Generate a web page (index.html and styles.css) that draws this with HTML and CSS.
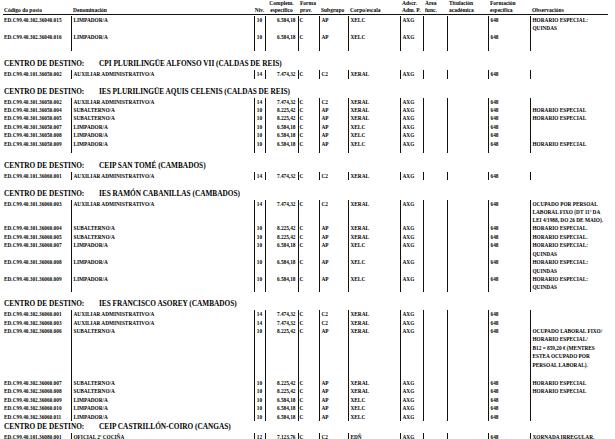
FILE: index.html
```html
<!DOCTYPE html>
<html lang="gl">
<head>
<meta charset="utf-8">
<title>Relación de postos</title>
<link rel="stylesheet" href="styles.css">
</head>
<body>
<div class="page">
<table class="hdr">
<colgroup><col class="c1"><col class="c2"><col class="c3"><col class="c4"><col class="c5"><col class="c6"><col class="c7"><col class="c8"><col class="c9"><col class="c10"><col class="c11"><col class="c12"></colgroup>
<tr>
<th class="l">Código do posto</th><th class="l">Denominación</th><th class="ctr">Niv.</th><th class="ctr">Complem.<br>específico</th><th class="l">Forma<br>prov.</th><th class="l">Subgrupo</th><th class="l">Corpo/escala</th><th class="l">Adscr.<br>Adm. P.</th><th class="l">Área<br>func.</th><th class="l">Titulación<br>académica</th><th class="l">Formación<br>específica</th><th class="l">Observacións</th>
</tr>
</table>

<table class="blk first">
<colgroup><col class="c1"><col class="c2"><col class="c3"><col class="c4"><col class="c5"><col class="c6"><col class="c7"><col class="c8"><col class="c9"><col class="c10"><col class="c11"><col class="c12"></colgroup>
<tr><td>ED.C99.40.302.36040.015</td><td>LIMPADOR/A</td><td class="n">10</td><td class="m">6.584,18</td><td class="f">C</td><td>AP</td><td>XELC</td><td>AXG</td><td></td><td></td><td>648</td><td>HORARIO ESPECIAL:<br>QUINDAS</td></tr>
<tr><td>ED.C99.40.302.36040.016</td><td>LIMPADOR/A</td><td class="n">10</td><td class="m">6.584,18</td><td class="f">C</td><td>AP</td><td>XELC</td><td>AXG</td><td></td><td></td><td>648</td><td></td></tr>
<tr class="pad"><td></td><td></td><td></td><td></td><td></td><td></td><td></td><td></td><td></td><td></td><td></td><td></td></tr>
</table>

<div class="sec"><span class="lbl">CENTRO DE DESTINO:</span>CPI PLURILINGÜE ALFONSO VII (CALDAS DE REIS)</div>
<table class="blk">
<colgroup><col class="c1"><col class="c2"><col class="c3"><col class="c4"><col class="c5"><col class="c6"><col class="c7"><col class="c8"><col class="c9"><col class="c10"><col class="c11"><col class="c12"></colgroup>
<tr><td>ED.C99.40.101.36050.002</td><td>AUXILIAR ADMINISTRATIVO/A</td><td class="n">14</td><td class="m">7.474,32</td><td class="f">C</td><td>C2</td><td>XERAL</td><td>AXG</td><td></td><td></td><td>648</td><td></td></tr>
</table>

<div class="sec"><span class="lbl">CENTRO DE DESTINO:</span>IES PLURILINGÜE AQUIS CELENIS (CALDAS DE REIS)</div>
<table class="blk">
<colgroup><col class="c1"><col class="c2"><col class="c3"><col class="c4"><col class="c5"><col class="c6"><col class="c7"><col class="c8"><col class="c9"><col class="c10"><col class="c11"><col class="c12"></colgroup>
<tr><td>ED.C99.40.301.36050.002</td><td>AUXILIAR ADMINISTRATIVO/A</td><td class="n">14</td><td class="m">7.474,32</td><td class="f">C</td><td>C2</td><td>XERAL</td><td>AXG</td><td></td><td></td><td>648</td><td></td></tr>
<tr><td>ED.C99.40.301.36050.004</td><td>SUBALTERNO/A</td><td class="n">10</td><td class="m">8.225,42</td><td class="f">C</td><td>AP</td><td>XERAL</td><td>AXG</td><td></td><td></td><td>648</td><td>HORARIO ESPECIAL</td></tr>
<tr><td>ED.C99.40.301.36050.005</td><td>SUBALTERNO/A</td><td class="n">10</td><td class="m">8.225,42</td><td class="f">C</td><td>AP</td><td>XERAL</td><td>AXG</td><td></td><td></td><td>648</td><td>HORARIO ESPECIAL</td></tr>
<tr><td>ED.C99.40.301.36050.007</td><td>LIMPADOR/A</td><td class="n">10</td><td class="m">6.584,18</td><td class="f">C</td><td>AP</td><td>XELC</td><td>AXG</td><td></td><td></td><td>648</td><td></td></tr>
<tr><td>ED.C99.40.301.36050.008</td><td>LIMPADOR/A</td><td class="n">10</td><td class="m">6.584,18</td><td class="f">C</td><td>AP</td><td>XELC</td><td>AXG</td><td></td><td></td><td>648</td><td></td></tr>
<tr><td>ED.C99.40.301.36050.009</td><td>LIMPADOR/A</td><td class="n">10</td><td class="m">6.584,18</td><td class="f">C</td><td>AP</td><td>XELC</td><td>AXG</td><td></td><td></td><td>648</td><td>HORARIO ESPECIAL</td></tr>
<tr class="pad short"><td></td><td></td><td></td><td></td><td></td><td></td><td></td><td></td><td></td><td></td><td></td><td></td></tr>
</table>

<div class="sec"><span class="lbl">CENTRO DE DESTINO:</span>CEIP SAN TOMÉ (CAMBADOS)</div>
<table class="blk">
<colgroup><col class="c1"><col class="c2"><col class="c3"><col class="c4"><col class="c5"><col class="c6"><col class="c7"><col class="c8"><col class="c9"><col class="c10"><col class="c11"><col class="c12"></colgroup>
<tr><td>ED.C99.40.101.36060.001</td><td>AUXILIAR ADMINISTRATIVO/A</td><td class="n">14</td><td class="m">7.474,32</td><td class="f">C</td><td>C2</td><td>XERAL</td><td>AXG</td><td></td><td></td><td>648</td><td></td></tr>
</table>

<div class="sec wide"><span class="lbl">CENTRO DE DESTINO:</span>IES RAMÓN CABANILLAS (CAMBADOS)</div>
<table class="blk">
<colgroup><col class="c1"><col class="c2"><col class="c3"><col class="c4"><col class="c5"><col class="c6"><col class="c7"><col class="c8"><col class="c9"><col class="c10"><col class="c11"><col class="c12"></colgroup>
<tr><td>ED.C99.40.301.36060.003</td><td>AUXILIAR ADMINISTRATIVO/A</td><td class="n">14</td><td class="m">7.474,32</td><td class="f">C</td><td>C2</td><td>XERAL</td><td>AXG</td><td></td><td></td><td>648</td><td class="obs3">OCUPADO POR PERSOAL<br>LABORAL FIXO (DT 11ª DA<br>LEI 4/1988, DO 26 DE MAIO).</td></tr>
<tr><td>ED.C99.40.301.36060.004</td><td>SUBALTERNO/A</td><td class="n">10</td><td class="m">8.225,42</td><td class="f">C</td><td>AP</td><td>XERAL</td><td>AXG</td><td></td><td></td><td>648</td><td>HORARIO ESPECIAL.</td></tr>
<tr><td>ED.C99.40.301.36060.005</td><td>SUBALTERNO/A</td><td class="n">10</td><td class="m">8.225,42</td><td class="f">C</td><td>AP</td><td>XERAL</td><td>AXG</td><td></td><td></td><td>648</td><td>HORARIO ESPECIAL.</td></tr>
<tr><td>ED.C99.40.301.36060.007</td><td>LIMPADOR/A</td><td class="n">10</td><td class="m">6.584,18</td><td class="f">C</td><td>AP</td><td>XELC</td><td>AXG</td><td></td><td></td><td>648</td><td>HORARIO ESPECIAL:<br>QUINDAS</td></tr>
<tr><td>ED.C99.40.301.36060.008</td><td>LIMPADOR/A</td><td class="n">10</td><td class="m">6.584,18</td><td class="f">C</td><td>AP</td><td>XELC</td><td>AXG</td><td></td><td></td><td>648</td><td>HORARIO ESPECIAL:<br>QUINDAS</td></tr>
<tr><td>ED.C99.40.301.36060.009</td><td>LIMPADOR/A</td><td class="n">10</td><td class="m">6.584,18</td><td class="f">C</td><td>AP</td><td>XELC</td><td>AXG</td><td></td><td></td><td>648</td><td>HORARIO ESPECIAL:<br>QUINDAS</td></tr>
</table>

<div class="sec tight"><span class="lbl">CENTRO DE DESTINO:</span>IES FRANCISCO ASOREY (CAMBADOS)</div>
<table class="blk">
<colgroup><col class="c1"><col class="c2"><col class="c3"><col class="c4"><col class="c5"><col class="c6"><col class="c7"><col class="c8"><col class="c9"><col class="c10"><col class="c11"><col class="c12"></colgroup>
<tr><td>ED.C99.40.302.36060.001</td><td>AUXILIAR ADMINISTRATIVO/A</td><td class="n">14</td><td class="m">7.474,32</td><td class="f">C</td><td>C2</td><td>XERAL</td><td>AXG</td><td></td><td></td><td>648</td><td></td></tr>
<tr><td>ED.C99.40.302.36060.003</td><td>AUXILIAR ADMINISTRATIVO/A</td><td class="n">14</td><td class="m">7.474,32</td><td class="f">C</td><td>C2</td><td>XERAL</td><td>AXG</td><td></td><td></td><td>648</td><td></td></tr>
<tr class="tall"><td>ED.C99.40.302.36060.006</td><td>SUBALTERNO/A</td><td class="n">10</td><td class="m">8.225,42</td><td class="f">C</td><td>AP</td><td>XERAL</td><td>AXG</td><td></td><td></td><td>648</td><td>OCUPADO LABORAL FIXO/<br>HORARIO ESPECIAL/<br>B12 = 859,20 € (MENTRES<br>ESTEA OCUPADO POR<br>PERSOAL LABORAL).</td></tr>
<tr><td>ED.C99.40.302.36060.007</td><td>SUBALTERNO/A</td><td class="n">10</td><td class="m">8.225,42</td><td class="f">C</td><td>AP</td><td>XERAL</td><td>AXG</td><td></td><td></td><td>648</td><td>HORARIO ESPECIAL</td></tr>
<tr><td>ED.C99.40.302.36060.008</td><td>SUBALTERNO/A</td><td class="n">10</td><td class="m">8.225,42</td><td class="f">C</td><td>AP</td><td>XERAL</td><td>AXG</td><td></td><td></td><td>648</td><td>HORARIO ESPECIAL</td></tr>
<tr><td>ED.C99.40.302.36060.009</td><td>LIMPADOR/A</td><td class="n">10</td><td class="m">6.584,18</td><td class="f">C</td><td>AP</td><td>XELC</td><td>AXG</td><td></td><td></td><td>648</td><td></td></tr>
<tr><td>ED.C99.40.302.36060.010</td><td>LIMPADOR/A</td><td class="n">10</td><td class="m">6.584,18</td><td class="f">C</td><td>AP</td><td>XELC</td><td>AXG</td><td></td><td></td><td>648</td><td></td></tr>
<tr><td>ED.C99.40.302.36060.011</td><td>LIMPADOR/A</td><td class="n">10</td><td class="m">6.584,18</td><td class="f">C</td><td>AP</td><td>XELC</td><td>AXG</td><td></td><td></td><td>648</td><td></td></tr>
</table>

<div class="sec tighter"><span class="lbl">CENTRO DE DESTINO:</span>CEIP CASTRILLÓN-COIRO (CANGAS)</div>
<table class="blk">
<colgroup><col class="c1"><col class="c2"><col class="c3"><col class="c4"><col class="c5"><col class="c6"><col class="c7"><col class="c8"><col class="c9"><col class="c10"><col class="c11"><col class="c12"></colgroup>
<tr><td>ED.C99.40.101.36080.001</td><td>OFICIAL 2ª COCIÑA</td><td class="n">12</td><td class="m">7.123,76</td><td class="f">C</td><td>C2</td><td>EDÑ</td><td>AXG</td><td></td><td></td><td>648</td><td>XORNADA IRREGULAR.</td></tr>
</table>
</div>
</body>
</html>
```
FILE: styles.css
```css
html, body {
  margin: 0;
  padding: 0;
  background: #fff;
}
body {
  font-family: "Liberation Serif", "Times New Roman", serif;
  font-weight: bold;
  color: #000;
  overflow: hidden;
}
.page {
  padding: 0 0 0 3px;
  width: 605px;
}
table {
  border-collapse: collapse;
  table-layout: fixed;
  width: 605px;
}
col.c1 { width: 68px; }
col.c2 { width: 183px; }
col.c3 { width: 11px; }
col.c4 { width: 33px; }
col.c5 { width: 21px; }
col.c6 { width: 29px; }
col.c7 { width: 52px; }
col.c8 { width: 23px; }
col.c9 { width: 24px; }
col.c10 { width: 41px; }
col.c11 { width: 42px; }
col.c12 { width: 78px; }

.hdr th {
  font-size: 5.5px;
  line-height: 7px;
  height: 14px;
  padding: 0 0 0 2px;
  vertical-align: bottom;
  white-space: nowrap;
  font-weight: bold;
  border-bottom: 1px solid #111;
}
.hdr th.l { text-align: left; }
.hdr th.ctr { text-align: center; padding: 0; }
.hdr th:first-child { padding-left: 1px; }

.blk.first { margin-top: 1px; }
.blk td {
  font-size: 5.3px;
  line-height: 8.4px;
  padding: 0 0 0 2px;
  vertical-align: top;
  white-space: nowrap;
  overflow: hidden;
  border-left: 1px solid #111;
}
.blk td:first-child {
  border-left: none;
  padding-left: 1px;
}
.blk td.n { text-align: center; padding: 0; }
.blk td.m { text-align: right; padding: 0 2px 0 0; }
.blk td.f { padding-left: 1px; }
.blk td.obs3 { line-height: 8px; }
.blk tr.pad td { height: 10px; }
.blk tr.pad.short td { height: 5px; }
.blk tr.tall td { height: 52px; }

.sec {
  font-size: 7.3px;
  line-height: 10px;
  margin: 8px 0 1px 1px;
  white-space: nowrap;
}
.sec.wide { margin-top: 9px; }
.sec.tight { margin-top: 7.5px; }
.sec.tighter { margin-top: 1px; }
.sec .lbl {
  display: inline-block;
  width: 95px;
}
```
